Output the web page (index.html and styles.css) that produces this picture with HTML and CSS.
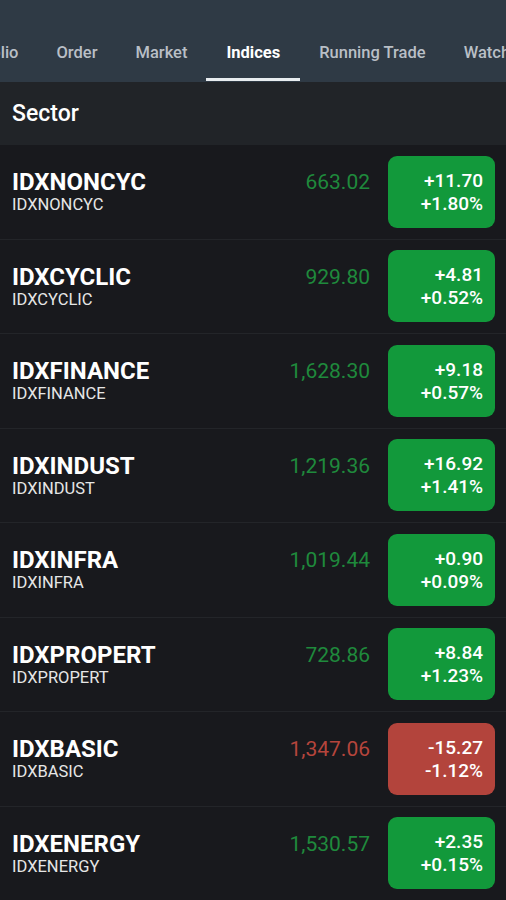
FILE: index.html
```html
<!DOCTYPE html>
<html lang="en">

<head>
    <meta charset="UTF-8">
    <meta name="viewport" content="width=device-width, initial-scale=1.0">
    <title>Indices</title>
    <link rel="stylesheet" href="styles.css">
</head>

<body>
    <header class="topbar">
        <div class="status"></div>
        <nav class="tabs">
            <a href="#" class="tab">Portfolio</a>
            <a href="#" class="tab">Order</a>
            <a href="#" class="tab">Market</a>
            <a href="#" class="tab active">Indices</a>
            <a href="#" class="tab">Running Trade</a>
            <a href="#" class="tab">Watchlist</a>
        </nav>
    </header>

    <div class="section">Sector</div>

    <ul class="list">
        <li class="row">
            <div class="names">
                <div class="code">IDXNONCYC</div>
                <div class="name">IDXNONCYC</div>
            </div>
            <div class="value up">663.02</div>
            <div class="change up">
                <span>+11.70</span>
                <span>+1.80%</span>
            </div>
        </li>
        <li class="row">
            <div class="names">
                <div class="code">IDXCYCLIC</div>
                <div class="name">IDXCYCLIC</div>
            </div>
            <div class="value up">929.80</div>
            <div class="change up">
                <span>+4.81</span>
                <span>+0.52%</span>
            </div>
        </li>
        <li class="row">
            <div class="names">
                <div class="code">IDXFINANCE</div>
                <div class="name">IDXFINANCE</div>
            </div>
            <div class="value up">1,628.30</div>
            <div class="change up">
                <span>+9.18</span>
                <span>+0.57%</span>
            </div>
        </li>
        <li class="row">
            <div class="names">
                <div class="code">IDXINDUST</div>
                <div class="name">IDXINDUST</div>
            </div>
            <div class="value up">1,219.36</div>
            <div class="change up">
                <span>+16.92</span>
                <span>+1.41%</span>
            </div>
        </li>
        <li class="row">
            <div class="names">
                <div class="code">IDXINFRA</div>
                <div class="name">IDXINFRA</div>
            </div>
            <div class="value up">1,019.44</div>
            <div class="change up">
                <span>+0.90</span>
                <span>+0.09%</span>
            </div>
        </li>
        <li class="row">
            <div class="names">
                <div class="code">IDXPROPERT</div>
                <div class="name">IDXPROPERT</div>
            </div>
            <div class="value up">728.86</div>
            <div class="change up">
                <span>+8.84</span>
                <span>+1.23%</span>
            </div>
        </li>
        <li class="row">
            <div class="names">
                <div class="code">IDXBASIC</div>
                <div class="name">IDXBASIC</div>
            </div>
            <div class="value down">1,347.06</div>
            <div class="change down">
                <span>-15.27</span>
                <span>-1.12%</span>
            </div>
        </li>
        <li class="row">
            <div class="names">
                <div class="code">IDXENERGY</div>
                <div class="name">IDXENERGY</div>
            </div>
            <div class="value up">1,530.57</div>
            <div class="change up">
                <span>+2.35</span>
                <span>+0.15%</span>
            </div>
        </li>
    </ul>
</body>

</html>
```

FILE: styles.css
```css
body {
    margin: 0;
    font-family: Roboto, "Liberation Sans", sans-serif;
    background-color: #18191d;
    color: #fff;
    overflow: hidden;
}

.topbar {
    background-color: #2f3a45;
    height: 82px;
    display: flex;
    flex-direction: column;
    overflow: hidden;
}

.status {
    height: 26px;
}

.tabs {
    display: flex;
    height: 56px;
    white-space: nowrap;
    margin-left: -65px;
}

.tab {
    color: #b9bfc6;
    text-decoration: none;
    font-size: 16.5px;
    font-weight: 500;
    padding: 0 19px;
    display: flex;
    align-items: center;
    border-bottom: 3px solid transparent;
    margin-bottom: 1px;
}

.tab.active {
    color: #fff;
    font-weight: 700;
    padding: 0 20px;
    border-bottom-color: #e8ecef;
}

.section {
    background-color: #212428;
    height: 63px;
    display: flex;
    align-items: center;
    padding-left: 12px;
    font-size: 23px;
    font-weight: 500;
}

.list {
    list-style: none;
    margin: 0;
    padding: 0;
}

.row {
    height: 93.5px;
    border-bottom: 1px solid #232529;
    display: flex;
    align-items: center;
    padding: 0 11px 0 12px;
}

.names {
    flex: 1;
}

.code {
    font-size: 24px;
    font-weight: 700;
    line-height: 26px;
}

.name {
    font-size: 16.5px;
    color: #e6e6e6;
    line-height: 19px;
}

.value {
    font-size: 21px;
    margin-right: 18px;
    margin-top: -19px;
}

.value.up {
    color: #1f8a3c;
}

.value.down {
    color: #b5453c;
}

.change {
    width: 107px;
    height: 72px;
    border-radius: 9px;
    box-sizing: border-box;
    padding-right: 12px;
    display: flex;
    flex-direction: column;
    justify-content: center;
    align-items: flex-end;
    font-size: 19px;
    font-weight: 500;
    line-height: 23px;
    color: #fff;
}

.change.up {
    background-color: #12993b;
}

.change.down {
    background-color: #b3443c;
}
```
